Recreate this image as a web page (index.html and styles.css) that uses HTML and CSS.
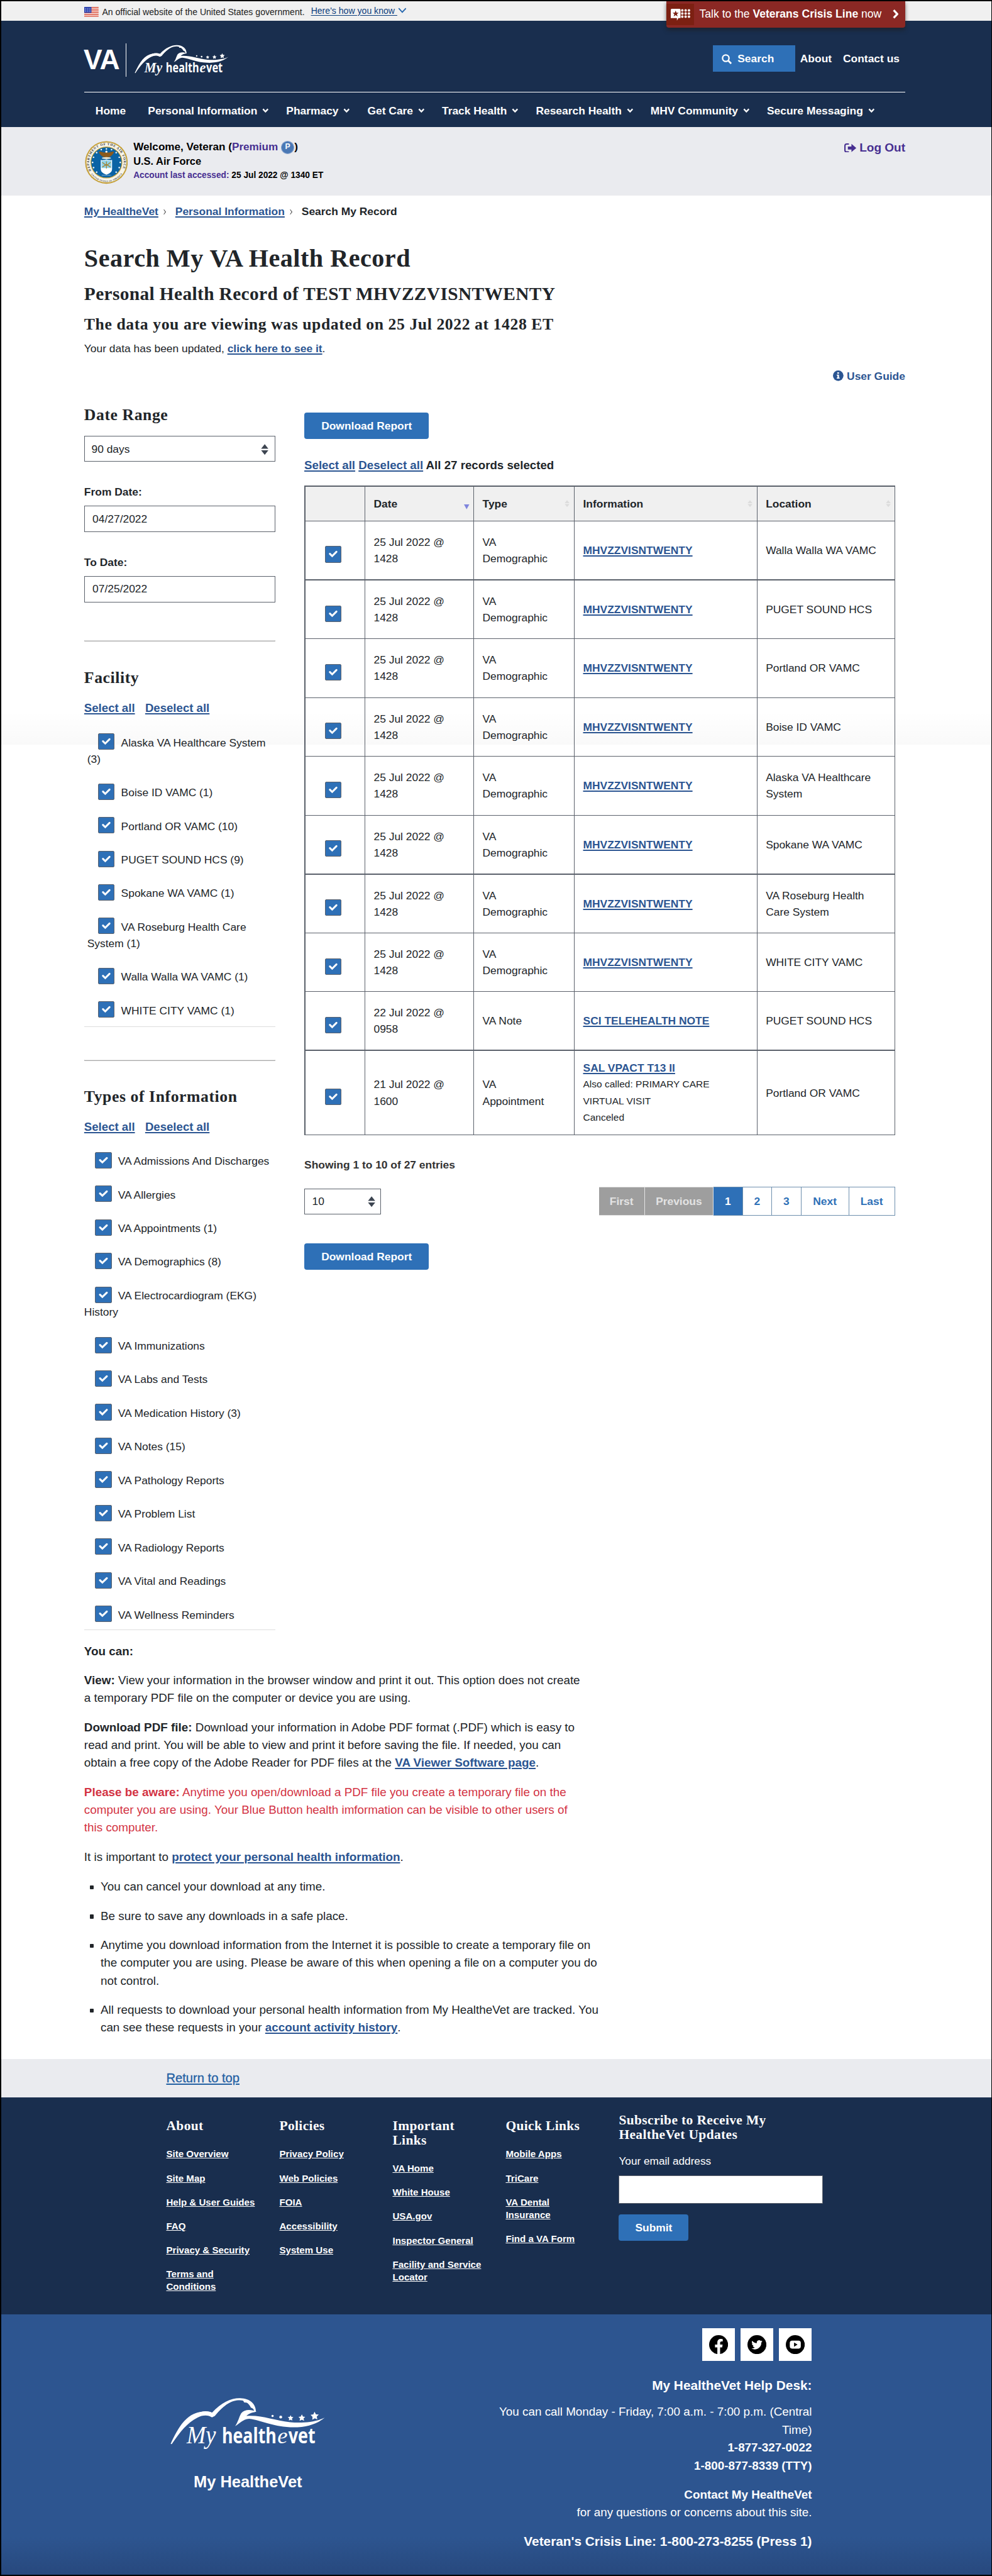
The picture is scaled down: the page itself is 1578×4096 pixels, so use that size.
FILE: index.html
```html
<!DOCTYPE html>
<html lang="en">
<head>
<meta charset="utf-8">
<title>Search My VA Health Record</title>
<link rel="stylesheet" href="styles.css">
</head>
<body>
<svg class="defs" width="0" height="0">
  <symbol id="eagle" viewBox="0 0 555 195">
    <path d="M5 165C35 100 62 60 110 52C128 49 142 50 152 54C185 18 222 2 252 3C286 4 307 22 308 50L302 52C302 44 298 38 290 36C282 20 268 10 250 10C222 10 196 24 162 66L152 71C140 62 118 62 100 72C65 90 40 120 9 166Z" fill="#fff"/>
    <path d="M152 54C135 46 112 48 92 60C112 58 135 60 150 70L164 62C182 40 205 20 230 10C205 14 176 30 158 56Z" fill="#fff"/>
    <path d="M262 10C274 9 286 14 292 22C284 20 274 18 266 18Z" fill="#fff"/>
    <path d="M310 50C288 42 268 42 256 56C248 68 246 86 234 102C252 92 260 78 284 76C330 82 360 102 430 106C490 108 528 92 552 72C520 88 470 92 430 88C370 82 330 62 274 66C282 56 296 54 310 50Z" fill="#fff"/>
    <g fill="#fff"><circle cx="367" cy="66" r="4"/><circle cx="396" cy="70" r="5"/>
      <path d="M431 63l3 6 7 1-5 5 1 7-6-3-6 3 1-7-5-5 7-1z"/>
      <path d="M471 60l4 8 8 1-6 6 2 8-8-4-8 4 2-8-6-6 8-1z"/>
      <path d="M516 51l5 9 10 1-7 7 2 10-9-4-9 5 1-10-7-7 10-2z"/></g>
  </symbol>
  <symbol id="down" viewBox="0 0 13 10"><path d="M1.7 1.7L6.5 6.8L11.3 1.7" fill="none" stroke="#fff" stroke-width="2.8"/></symbol>
  <symbol id="updown" viewBox="0 0 16 22"><path d="M8 0L15.5 9.3H.5zM8 22L15.5 12.7H.5z" fill="currentColor"/></symbol>
</svg>

<div class="banner">
  <svg class="flag" viewBox="0 0 28 19"><rect width="28" height="19" fill="#fff"/><g fill="#db5a45"><rect width="28" height="2"/><rect y="3.4" width="28" height="2"/><rect y="6.8" width="28" height="2"/><rect y="10.2" width="28" height="2"/><rect y="13.6" width="28" height="2"/><rect y="17" width="28" height="2"/></g><rect width="14" height="11.5" fill="#2c42ad"/><g fill="#aab4e6"><circle cx="3" cy="3" r="1"/><circle cx="7" cy="3" r="1"/><circle cx="11" cy="3" r="1"/><circle cx="3" cy="6" r="1"/><circle cx="7" cy="6" r="1"/><circle cx="11" cy="6" r="1"/><circle cx="3" cy="9" r="1"/><circle cx="7" cy="9" r="1"/><circle cx="11" cy="9" r="1"/></g></svg>
  <span class="official">An official website of the United States government.</span>
  <a class="how">Here's how you know </a>
  <svg class="how-arrow" viewBox="0 0 17 11"><path d="M1.5 1.5L8.5 9L15.5 1.5" fill="none" stroke="#2567ae" stroke-width="2.2"/></svg>
  <div class="crisis">
    <span class="crisis-icon"><svg viewBox="0 0 38 23"><path d="M2 0H17Q19 0 19 2V18H15L12 23V18H0V2Q0 0 2 0Z" fill="#fff"/><path d="M9.500 3.500l1.700 4.300h4.300l-3.500 2.700 1.400 4.500-3.900-2.700-3.900 2.700 1.400-4.500-3.500-2.700h4.300z" fill="#7c2012"/><g fill="#fff"><circle cx="22.500" cy="3" r="2.400"/><circle cx="29" cy="3" r="2.400"/><circle cx="35.500" cy="3" r="2.400"/><circle cx="22.500" cy="9.200" r="2.400"/><circle cx="29" cy="9.200" r="2.400"/><circle cx="35.500" cy="9.200" r="2.400"/><circle cx="22.500" cy="15.400" r="2.400"/><circle cx="29" cy="15.400" r="2.400"/><circle cx="35.500" cy="15.400" r="2.400"/></g></svg></span>
    <span class="crisis-text">Talk to the <b>Veterans Crisis Line</b> now</span>
    <svg class="crisis-arrow" viewBox="0 0 12 18"><path d="M2 1.500L9 9L2 16.500" fill="none" stroke="#fff" stroke-width="4"/></svg>
  </div>
</div>

<header class="header">
  <div class="brand">
    <span class="va">VA</span>
    <span class="bar"></span>
    <svg class="logo" viewBox="0 0 555 195"><use href="#eagle" width="555" height="195"/>
      <text x="62" y="162" class="logo-script" textLength="104" lengthAdjust="spacingAndGlyphs" font-size="88">My</text>
      <text x="187" y="163" class="logo-sans" textLength="194" lengthAdjust="spacingAndGlyphs" font-size="76">health</text>
      <text x="384" y="163" class="logo-script" font-size="82">e</text>
      <text x="423" y="163" class="logo-sans" textLength="96" lengthAdjust="spacingAndGlyphs" font-size="76">vet</text>
    </svg>
    <div class="tools">
      <a class="search"><svg viewBox="0 0 20 20"><circle cx="8" cy="8" r="6.300" fill="none" stroke="#fff" stroke-width="2.800"/><path d="M12.600 12.600L18.500 18.500" stroke="#fff" stroke-width="3.400"/></svg>Search</a>
      <a class="about">About</a>
      <a>Contact us</a>
    </div>
  </div>
  <nav class="nav">
    <a class="home">Home</a>
    <a>Personal Information<svg><use href="#down"/></svg></a>
    <a>Pharmacy<svg><use href="#down"/></svg></a>
    <a>Get Care<svg><use href="#down"/></svg></a>
    <a>Track Health<svg><use href="#down"/></svg></a>
    <a>Research Health<svg><use href="#down"/></svg></a>
    <a>MHV Community<svg><use href="#down"/></svg></a>
    <a>Secure Messaging<svg><use href="#down"/></svg></a>
  </nav>
</header>

<section class="welcome">
  <svg class="seal" viewBox="0 0 84 84">
    <circle cx="42" cy="42" r="41.500" fill="#c5a03a"/><circle cx="42" cy="42" r="39" fill="#f6f4ea"/><circle cx="42" cy="42" r="31" fill="#c5a03a"/><circle cx="42" cy="42" r="29.500" fill="#0a63a5"/>
    <path id="ring-top" d="M12.300 58A33.700 33.700 0 1 1 71.700 58" fill="none"/>
    <path id="ring-bottom" d="M9 60A37.300 37.300 0 0 0 75 60" fill="none"/>
    <text class="seal-text" font-size="6.500"><textPath href="#ring-top" textLength="134">DEPARTMENT OF THE AIR FORCE</textPath></text>
    <text class="seal-text" font-size="4"><textPath href="#ring-bottom" startOffset="6" textLength="70">UNITED STATES OF AMERICA</textPath></text>
    <g fill="#fff"><circle cx="42" cy="15.500" r="1.500"/><circle cx="32" cy="17" r="1.500"/><circle cx="52" cy="17" r="1.500"/><circle cx="23" cy="23" r="1.500"/><circle cx="61" cy="23" r="1.500"/><circle cx="17" cy="32" r="1.500"/><circle cx="67" cy="32" r="1.500"/><circle cx="15" cy="42" r="1.500"/><circle cx="69" cy="42" r="1.500"/><circle cx="17" cy="52" r="1.500"/><circle cx="67" cy="52" r="1.500"/><circle cx="23" cy="61" r="1.500"/><circle cx="61" cy="61" r="1.500"/></g>
    <path d="M27 21C32 20 36 23 39 23L42 19.500L45 23C48 23 52 20 57 21C55 27 50 31 45 32L42 34L39 32C34 31 29 27 27 21Z" fill="#8a5a1d"/><circle cx="42" cy="21" r="2" fill="#fff"/>
    <ellipse cx="42" cy="33.500" rx="9" ry="2" fill="#e8e4d0"/>
    <path d="M31 37Q36 39 42 36Q48 39 53 37V55Q53 62 42 66Q31 62 31 55Z" fill="#fff"/><path d="M32.500 38.500Q37 40 42 37.500Q47 40 51.500 38.500V53H32.500Z" fill="#8fd3ea"/>
    <path d="M42 40V54M34 42L42 48L50 42M34 51L42 46L50 51" stroke="#a5802c" stroke-width="1.500" fill="none"/>
    <path d="M33 67h18" stroke="#8fb7dc" stroke-width="1.500" stroke-dasharray="2 .8"/>
  </svg>
  <div class="who">
    <div class="who-name">Welcome, Veteran (<span class="purple">Premium</span> <span class="p">P</span>)</div>
    <div class="who-branch">U.S. Air Force</div>
    <div class="who-last"><span class="purple">Account last accessed:</span> 25 Jul 2022 @ 1340 ET</div>
  </div>
  <a class="logout"><svg viewBox="0 0 24 18"><path d="M9 1.300H4.500Q1.300 1.300 1.300 4.500V13.500Q1.300 16.700 4.500 16.700H9" fill="none" stroke="currentColor" stroke-width="2.600"/><path d="M7 6H14V1L23.500 9L14 17V12H7Z" fill="currentColor"/></svg>Log Out</a>
</section>

<main class="main">
  <div class="crumbs"><a>My HealtheVet</a><i></i><a>Personal Information</a><i></i><span>Search My Record</span></div>
  <h1>Search My VA Health Record</h1>
  <h2>Personal Health Record of TEST MHVZZVISNTWENTY</h2>
  <h3 class="updated">The data you are viewing was updated on 25 Jul 2022 at 1428 ET</h3>
  <p class="notice">Your data has been updated, <a>click here to see it</a>.</p>
  <div class="guide"><svg viewBox="0 0 20 20"><circle cx="10" cy="10" r="10" fill="currentColor"/><path d="M8.300 3.500h3.200v2.900H8.300zM7.200 8h4.300v5.700h1.300v2H7.200v-2h1.400V10H7.200z" fill="#fff"/></svg>User Guide</div>

  <div class="columns">
    <aside class="filters">
      <h3 class="range-title">Date Range</h3>
      <div class="select range"><span>90 days</span><svg><use href="#updown"/></svg></div>
      <label class="from">From Date:</label>
      <div class="input">04/27/2022</div>
      <label class="to">To Date:</label>
      <div class="input">07/25/2022</div>
      <div class="rule first"></div>
      <h3 class="group-title">Facility</h3>
      <div class="pick"><a>Select all</a><a>Deselect all</a></div>
      <ul class="checks facility">
        <li><span class="box"></span>Alaska VA Healthcare System<br>(3)</li>
        <li><span class="box"></span>Boise ID VAMC (1)</li>
        <li><span class="box"></span>Portland OR VAMC (10)</li>
        <li><span class="box"></span>PUGET SOUND HCS (9)</li>
        <li><span class="box"></span>Spokane WA VAMC (1)</li>
        <li><span class="box"></span>VA Roseburg Health Care<br>System (1)</li>
        <li><span class="box"></span>Walla Walla WA VAMC (1)</li>
        <li><span class="box"></span>WHITE CITY VAMC (1)</li>
      </ul>
      <div class="rule second"></div>
      <h3 class="group-title">Types of Information</h3>
      <div class="pick"><a>Select all</a><a>Deselect all</a></div>
      <ul class="checks types">
        <li><span class="box"></span>VA Admissions And Discharges</li>
        <li><span class="box"></span>VA Allergies</li>
        <li><span class="box"></span>VA Appointments (1)</li>
        <li><span class="box"></span>VA Demographics (8)</li>
        <li><span class="box"></span>VA Electrocardiogram (EKG)<br>History</li>
        <li><span class="box"></span>VA Immunizations</li>
        <li><span class="box"></span>VA Labs and Tests</li>
        <li><span class="box"></span>VA Medication History (3)</li>
        <li><span class="box"></span>VA Notes (15)</li>
        <li><span class="box"></span>VA Pathology Reports</li>
        <li><span class="box"></span>VA Problem List</li>
        <li><span class="box"></span>VA Radiology Reports</li>
        <li><span class="box"></span>VA Vital and Readings</li>
        <li><span class="box"></span>VA Wellness Reminders</li>
      </ul>
    </aside>

    <div class="results">
      <a class="button">Download Report</a>
      <div class="selected"><a>Select all</a> <a>Deselect all</a> All 27 records selected</div>
      <table class="records">
        <colgroup><col class="c1"><col class="c2"><col class="c3"><col class="c4"><col class="c5"></colgroup>
        <thead><tr><th></th>
          <th><div>Date<svg class="sorted" viewBox="0 0 11 11"><path d="M0 1H11L5.500 11Z" fill="#7f85dd"/></svg></div></th>
          <th><div>Type<svg class="sort"><use href="#updown"/></svg></div></th>
          <th><div>Information<svg class="sort"><use href="#updown"/></svg></div></th>
          <th><div>Location<svg class="sort"><use href="#updown"/></svg></div></th></tr></thead>
        <tbody>
          <tr><td><span class="box"></span></td><td>25 Jul 2022 @<br>1428</td><td>VA<br>Demographic</td><td><a>MHVZZVISNTWENTY</a></td><td>Walla Walla WA VAMC</td></tr>
          <tr class="heavy"><td><span class="box"></span></td><td>25 Jul 2022 @<br>1428</td><td>VA<br>Demographic</td><td><a>MHVZZVISNTWENTY</a></td><td>PUGET SOUND HCS</td></tr>
          <tr><td><span class="box"></span></td><td>25 Jul 2022 @<br>1428</td><td>VA<br>Demographic</td><td><a>MHVZZVISNTWENTY</a></td><td>Portland OR VAMC</td></tr>
          <tr><td><span class="box"></span></td><td>25 Jul 2022 @<br>1428</td><td>VA<br>Demographic</td><td><a>MHVZZVISNTWENTY</a></td><td>Boise ID VAMC</td></tr>
          <tr><td><span class="box"></span></td><td>25 Jul 2022 @<br>1428</td><td>VA<br>Demographic</td><td><a>MHVZZVISNTWENTY</a></td><td>Alaska VA Healthcare<br>System</td></tr>
          <tr><td><span class="box"></span></td><td>25 Jul 2022 @<br>1428</td><td>VA<br>Demographic</td><td><a>MHVZZVISNTWENTY</a></td><td>Spokane WA VAMC</td></tr>
          <tr class="heavy"><td><span class="box"></span></td><td>25 Jul 2022 @<br>1428</td><td>VA<br>Demographic</td><td><a>MHVZZVISNTWENTY</a></td><td>VA Roseburg Health<br>Care System</td></tr>
          <tr><td><span class="box"></span></td><td>25 Jul 2022 @<br>1428</td><td>VA<br>Demographic</td><td><a>MHVZZVISNTWENTY</a></td><td>WHITE CITY VAMC</td></tr>
          <tr><td><span class="box"></span></td><td>22 Jul 2022 @<br>0958</td><td>VA Note</td><td><a>SCI TELEHEALTH NOTE</a></td><td>PUGET SOUND HCS</td></tr>
          <tr class="heavy tall"><td><span class="box"></span></td><td>21 Jul 2022 @<br>1600</td><td>VA<br>Appointment</td><td><a>SAL VPACT T13 II</a><div class="more">Also called: PRIMARY CARE<br>VIRTUAL VISIT<br>Canceled</div></td><td>Portland OR VAMC</td></tr>
        </tbody>
      </table>
      <div class="showing">Showing 1 to 10 of 27 entries</div>
      <div class="paging">
        <div class="select size"><span>10</span><svg><use href="#updown"/></svg></div>
        <div class="pages"><span class="off first-page">First</span><span class="off prev">Previous</span><span class="on">1</span><span>2</span><span>3</span><span class="next">Next</span><span class="last">Last</span></div>
      </div>
      <a class="button second-button">Download Report</a>
    </div>
  </div>

  <div class="help">
    <p><b>You can:</b></p>
    <p><b>View:</b> View your information in the browser window and print it out. This option does not create<br>a temporary PDF file on the computer or device you are using.</p>
    <p><b>Download PDF file:</b> Download your information in Adobe PDF format (.PDF) which is easy to<br>read and print. You will be able to view and print it before saving the file. If needed, you can<br>obtain a free copy of the Adobe Reader for PDF files at the <a>VA Viewer Software page</a>.</p>
    <p class="warn"><b>Please be aware:</b> Anytime you open/download a PDF file you create a temporary file on the<br>computer you are using. Your Blue Button health imformation can be visible to other users of<br>this computer.</p>
    <p>It is important to <a>protect your personal health information</a>.</p>
    <ul>
      <li>You can cancel your download at any time.</li>
      <li>Be sure to save any downloads in a safe place.</li>
      <li>Anytime you download information from the Internet it is possible to create a temporary file on<br>the computer you are using. Please be aware of this when opening a file on a computer you do<br>not control.</li>
      <li>All requests to download your personal health information from My HealtheVet are tracked. You<br>can see these requests in your <a>account activity history</a>.</li>
    </ul>
  </div>
</main>

<div class="return"><a>Return to top</a></div>

<footer>
  <div class="links">
    <div class="col"><h4>About</h4><a>Site Overview</a><a>Site Map</a><a>Help &amp; User Guides</a><a>FAQ</a><a>Privacy &amp; Security</a><a>Terms and<br>Conditions</a></div>
    <div class="col"><h4>Policies</h4><a>Privacy Policy</a><a>Web Policies</a><a>FOIA</a><a>Accessibility</a><a>System Use</a></div>
    <div class="col"><h4>Important<br>Links</h4><a>VA Home</a><a>White House</a><a>USA.gov</a><a>Inspector General</a><a>Facility and Service<br>Locator</a></div>
    <div class="col"><h4>Quick Links</h4><a>Mobile Apps</a><a>TriCare</a><a>VA Dental<br>Insurance</a><a>Find a VA Form</a></div>
    <div class="subscribe"><h4>Subscribe to Receive My<br>HealtheVet Updates</h4><label>Your email address</label><div class="email"></div><span class="submit">Submit</span></div>
  </div>
  <div class="contact">
    <div class="mark"><svg viewBox="0 0 555 195"><use href="#eagle" width="555" height="195"/>
      <text x="62" y="162" class="logo-script" textLength="104" lengthAdjust="spacingAndGlyphs" font-size="88">My</text>
      <text x="187" y="163" class="logo-sans" textLength="194" lengthAdjust="spacingAndGlyphs" font-size="76">health</text>
      <text x="384" y="163" class="logo-script" font-size="82">e</text>
      <text x="423" y="163" class="logo-sans" textLength="96" lengthAdjust="spacingAndGlyphs" font-size="76">vet</text>
    </svg><span>My HealtheVet</span></div>
    <div class="desk">
      <div class="social">
        <span><svg viewBox="0 0 38 38"><circle cx="19" cy="19" r="19"/><path d="M16.500 38V24.500H11.800V19H16.500V14.800C16.500 10 19.400 7.500 23.600 7.500C25.500 7.500 27 7.800 27.300 7.900V12.600H25C22.700 12.600 22 14 22 15.600V19H27L26.200 24.500H22V38Z" fill="#fff"/></svg></span>
        <span><svg viewBox="0 0 38 38"><circle cx="19" cy="19" r="19"/><path d="M30 12.500a8.500 8.500 0 0 1-2.600.7 4.500 4.500 0 0 0 2-2.500 9 9 0 0 1-2.900 1.100 4.500 4.500 0 0 0-7.700 4.100 12.800 12.800 0 0 1-9.300-4.700 4.500 4.500 0 0 0 1.400 6 4.500 4.500 0 0 1-2-.5c0 2.200 1.500 4 3.600 4.500a4.500 4.500 0 0 1-2 .1 4.500 4.500 0 0 0 4.200 3.100 9 9 0 0 1-6.700 1.900 12.800 12.800 0 0 0 19.700-11.400 9 9 0 0 0 2.300-2.400z" fill="#fff"/></svg></span>
        <span><svg viewBox="0 0 38 38"><circle cx="19" cy="19" r="19"/><rect x="8" y="11" width="22" height="16" rx="4.500" fill="#fff"/><path d="M16.500 14.800V23.200L23.500 19Z"/></svg></span>
      </div>
      <p class="big">My HealtheVet Help Desk:</p>
      <p class="call">You can call Monday - Friday, 7:00 a.m. - 7:00 p.m. (Central<br>Time)<br><b>1-877-327-0022</b><br><b>1-800-877-8339 (TTY)</b></p>
      <p class="site"><b>Contact My HealtheVet</b><br>for any questions or concerns about this site.</p>
      <p class="big line">Veteran's Crisis Line: 1-800-273-8255 (Press 1)</p>
    </div>
  </div>
</footer>
</body>
</html>
```
FILE: styles.css
```css
html { font-size: 8.163px; }
* { box-sizing: border-box; margin: 0; padding: 0; }
body {
  width: 1578px;
  height: 4096px;
  overflow: hidden;
  background: #fff;
  color: #212529;
  font-family: "Liberation Sans", Arial, sans-serif;
  font-size: 2.133rem;
  line-height: 3.2rem;
  position: relative;
}
body::after {
  content: "";
  position: absolute;
  inset: 0;
  border: 2px solid #000;
  border-width: 2px 1.500px 2px 2px;
}
/* faint fold shadow across the page */
body::before {
  content: "";
  position: absolute;
  left: 0;
  right: 0;
  top: 138.5rem;
  height: 6.6rem;
  background: linear-gradient(transparent, rgba(0, 0, 0, .025));
}
.defs { position: absolute; }
svg { display: block; }
ul { list-style: none; }
h1, h2, h3, h4 { font-family: "Liberation Serif", "Times New Roman", serif; font-weight: 700; }
a { white-space: nowrap; }

.logo-script { font-family: "Liberation Serif", serif; font-style: italic; fill: #fff; }
.logo-sans { font-family: "Open Sans", sans-serif; font-weight: 700; fill: #fff; }

/* government banner */
.banner {
  position: relative;
  display: flex;
  height: 4rem;
  padding-left: 16.4rem;
  background: #f0f0f0;
  font-size: 1.726rem;
}
.flag { width: 2.8rem; height: 1.9rem; margin-top: 1.4rem; }
.official { margin: .7rem 0 0 .7rem; width: 40.7rem; white-space: nowrap; color: #212121; }
.how { margin-top: .45rem; width: 16.9rem; color: #0b3d7c; text-decoration: underline; text-underline-offset: .2rem; white-space: pre; }
.how-arrow { width: 1.7rem; height: 1.1rem; margin-top: 1.5rem; }
.crisis {
  position: absolute;
  z-index: 2;
  left: 129.9rem;
  top: .3rem;
  width: 46.5rem;
  height: 5.1rem;
  display: flex;
  background: #8b2824;
  border-radius: 0 0 .5rem .5rem;
  box-shadow: 0 .4rem .8rem rgba(30, 30, 30, .6);
  color: #fff;
  font-size: 2.15rem;
}
.crisis-icon { width: 5.3rem; height: 4.2rem; margin-top: .4rem; padding: 1rem 0 0 .8rem; background: #7c2012; }
.crisis-icon svg { width: 3.8rem; height: 2.3rem; }
.crisis-text { margin: .8rem 0 0 1.1rem; width: 37.6rem; white-space: nowrap; }
.crisis-arrow { width: 1.2rem; height: 1.8rem; margin-top: 1.6rem; }

/* site header */
.header { height: 20.8rem; padding-left: 16.4rem; background: #192e4e; color: #fff; font-weight: 700; }
.brand { width: 160rem; height: 14rem; display: flex; border-bottom: 1px solid #fff; }
.va { width: 8.25rem; margin: 4.55rem 0 0 -.1rem; font-size: 5.45rem; line-height: 6.2rem; letter-spacing: -.1rem; }
.bar { width: 1px; height: 6.4rem; margin-top: 4.5rem; background: #fff; }
.logo { width: 18.5rem; height: 6.5rem; margin: 4.75rem 0 0 1.45rem; overflow: visible; }
.tools { display: flex; margin-left: auto; padding-right: 1.1rem; }
.tools a { padding-top: 5.75rem; margin-left: 2.2rem; }
.tools .search { display: flex; width: 16rem; height: 5.2rem; margin: 4.8rem 0 0; padding: 1.9rem 0 0 1.7rem; background: #2e70b7; line-height: 1.6rem; }
.search svg { width: 2rem; height: 2rem; margin: -.2rem 1.1rem 0 0; }
.tools .about { margin-left: 1rem; }
.nav { display: flex; padding: 2rem 0 0 2.2rem; }
.nav a { display: flex; margin-right: 3.38rem; }
.nav .home { margin-right: 4.3rem; }
.nav svg { width: 1.3rem; height: 1rem; margin: 1.1rem 0 0 .95rem; }

/* signed-in strip */
.welcome { height: 13.3rem; display: flex; padding-left: 16.5rem; background: #eaebef; font-weight: 700; color: #000; }
.seal { width: 8.4rem; height: 8.4rem; margin-top: 2.7rem; }
.seal-text { font-family: "Liberation Serif", serif; font-weight: 700; fill: #333; }
.who { margin: 2.1rem 0 0 1.1rem; width: 60rem; }
.purple { color: #472f91; }
.who-name { font-size: 2.1rem; height: 2.9rem; white-space: nowrap; }
.p { display: inline-block; width: 2.6rem; height: 2.5rem; margin: -1rem 0 0; vertical-align: .15rem; border-radius: 50%; background: #4a78b5; border: 1px solid #8fa9d0; color: #fff; font-size: 1.5rem; line-height: 2.2rem; text-align: center; }
.who-branch { font-size: 2.01rem; height: 2.85rem; }
.who-last { font-size: 1.68rem; }
.logout { display: flex; margin: 2.4rem 0 0 auto; padding-right: 16.9rem; color: #472f91; font-size: 2.33rem; }
.logout svg { width: 2.4rem; height: 1.8rem; margin: .7rem .6rem 0 0; }

/* page body */
.main { height: 363rem; padding-left: 16.4rem; }
.main a { color: #2b5592; font-weight: 700; text-decoration: underline; text-decoration-thickness: 2px; text-underline-offset: .25rem; }
.crumbs { display: flex; padding-top: 1.46rem; font-weight: 700; }
.crumbs i { width: .7rem; height: .7rem; margin: 1.4rem 1.8rem 0 .8rem; border: 1px solid #333; border-width: 1px 1px 0 0; transform: scaleX(.7) rotate(45deg); }
h1 { margin-top: 4.78rem; font-size: 4.92rem; line-height: 5.6rem; letter-spacing: .06rem; }
h2 { margin-top: 2.09rem; font-size: 3.6rem; line-height: 4rem; letter-spacing: .045rem; }
h3 { font-size: 3.15rem; line-height: 3.6rem; letter-spacing: .07rem; white-space: nowrap; }
.updated { margin-top: 2.21rem; }
.notice { margin-top: 1.22rem; }
.guide { display: flex; justify-content: flex-end; width: 160rem; margin-top: 2.23rem; color: #2b5592; font-weight: 700; }
.guide svg { width: 2.05rem; height: 2.05rem; margin: .45rem .6rem 0 0; }
.columns { display: flex; gap: 5.7rem; margin-top: 2.11rem; height: 240.5rem; }
.filters { width: 37.2rem; }

.range-title { margin-top: 2.07rem; }
.select { display: flex; justify-content: space-between; border: 1px solid #5b616b; }
.select svg { width: 1.5rem; height: 2.15rem; color: #3d4551; }
.range { height: 5.05rem; margin-top: 2.23rem; padding: .8rem 1.1rem 0 1.3rem; }
.range svg { margin-top: .7rem; }
label { display: block; font-weight: 700; }
.from { margin-top: 4.31rem; }
.to { margin-top: 4.26rem; }
.input { height: 5.1rem; margin-top: 1.1rem; padding: .75rem 1.5rem 0; border: 1px solid #5b616b; }
.rule { height: .3rem; border: 1px solid #bbb; border-bottom-color: #aaa; border-top-color: #ddd; }
.rule.first { margin-top: 7.4rem; }
.rule.second { margin-top: 6.35rem; }
.group-title { margin-top: 5.17rem; }
.pick { display: flex; gap: 2rem; margin-top: 2.54rem; font-size: 2.28rem; }
.checks { line-height: 3.25rem; border-bottom: 1px solid #ddd; white-space: nowrap; }
.facility { margin-top: 3.52rem; padding: 0 0 1.42rem .6rem; }
.facility li + li { margin-top: 3.28rem; }
.types { margin-top: 3.38rem; padding-bottom: 1.2rem; }
.types li + li { margin-top: 3.3rem; }
.box {
  display: inline-block;
  width: 3.2rem;
  height: 3.2rem;
  border: 1px solid #5b616b;
  border-radius: 2px;
  background: #2e70b7 url("data:image/svg+xml,%3Csvg xmlns='http://www.w3.org/2000/svg' viewBox='0 0 30 30'%3E%3Cpath d='M8.500 14.500L13 19L21.500 10.500' fill='none' stroke='white' stroke-width='3.800' stroke-linecap='round'/%3E%3C/svg%3E") center / 100% no-repeat;
}
.checks .box { margin: -.2rem 1.25rem 0 2.15rem; vertical-align: -.7rem; }

/* results */
.results { width: 115.1rem; }
.main .button {
  display: block;
  width: 24.3rem;
  height: 5.1rem;
  margin-top: 3.4rem;
  padding-top: .95rem;
  border-radius: .5rem;
  background: #2e70b7;
  color: #fff;
  text-align: center;
  text-decoration: none;
}
.selected { margin-top: 3.51rem; font-size: 2.29rem; font-weight: 700; }
.records { width: 115rem; margin-top: 2.37rem; border-collapse: collapse; table-layout: fixed; border-left: 2px solid #5b616b; border-top: 2px solid #5b616b; }
.c1 { width: 11.7rem; } .c2 { width: 21.2rem; } .c3 { width: 19.6rem; } .c4 { width: 35.6rem; } .c5 { width: 26.9rem; }
.records th, .records td { border: 1px solid #5b616b; padding: 0 0 0 1.65rem; text-align: left; vertical-align: middle; white-space: nowrap; }
.records th { height: 6.8rem; background: #f0f0f0; }
.records th div { display: flex; justify-content: space-between; align-items: center; padding-right: .8rem; }
.records td { height: 11.46rem; }
.records td:first-child { padding: 1.6rem 0 0 3.8rem; }
.records td .box { display: block; }
.records .heavy td { border-top-width: 2px; }
.records .tall td { height: 16.4rem; }
.sort { width: 1rem; height: 1.9rem; color: #dcdcdc; }
.sorted { width: 1.05rem; height: 1.1rem; margin-top: 1rem; }
.more { font-size: 1.9rem; }
.showing { margin-top: 4.2rem; font-weight: 700; color: #333; }
.paging { display: flex; justify-content: space-between; height: 5.6rem; margin-top: 2.69rem; }
.size { width: 15rem; height: 5.05rem; margin-top: .35rem; padding: .8rem 1rem 0 1.4rem; }
.size svg { margin-top: .5rem; }
.pages { display: flex; font-weight: 700; color: #2e70b7; text-align: center; line-height: 5.4rem; }
.pages span { width: 5.7rem; height: 5.6rem; border: 1px solid #6d8fae; border-left-width: 0; }
.pages .off { background: #9e9e9e; color: #e3e3e3; border-color: #e3e3e3; }
.pages .on { background: #2e70b7; color: #fff; }
.pages .first-page { width: 8.95rem; }
.pages .prev { width: 13.4rem; }
.pages .next { width: 9.3rem; }
.pages .last { width: 8.95rem; }
.main .second-button { margin-top: 5.4rem; }

.help { width: 110rem; margin-top: 2.44rem; font-size: 2.31rem; line-height: 3.44rem; white-space: nowrap; }
.help p, .help li { margin-bottom: 2.29rem; }
.help .warn { color: #d33343; }
.help ul { padding-left: 3.2rem; }
.help li { position: relative; }
.help li::before { content: ""; position: absolute; left: -2.05rem; top: 1.45rem; width: .75rem; height: .75rem; background: #212529; border-radius: 1px; }

/* footer */
.return { height: 7.4rem; padding: 2.05rem 0 0 32.4rem; background: #eaebef; font-size: 2.47rem; }
.return a { color: #2360a3; -webkit-text-stroke: .3px #2360a3; text-decoration: underline; text-decoration-thickness: 2px; text-underline-offset: .25rem; }
footer { color: #fff; }
.links { display: flex; height: 42.3rem; padding: 4.24rem 0 0 32.4rem; background: #192e4e; }
h4 { font-size: 2.63rem; line-height: 2.8rem; letter-spacing: .045rem; white-space: nowrap; }
.col { width: 22.05rem; display: flex; flex-direction: column; font-size: 1.85rem; line-height: 2.45rem; font-weight: 700; }
.col h4 { margin-bottom: .65rem; }
.col a { margin-top: 2.22rem; text-decoration: underline; }
.subscribe { margin-top: -1.1rem; }
.subscribe label { margin-top: 2.39rem; font-weight: 400; font-size: 2.11rem; line-height: 2.8rem; }
.email { width: 39.8rem; height: 5.57rem; margin-top: 1.27rem; background: #fff; border: 1px solid #5b616b; }
.submit { display: block; width: 13.6rem; height: 5.1rem; margin-top: 2.13rem; padding-top: .95rem; border-radius: .5rem; background: #2e70b7; text-align: center; font-weight: 700; }
.contact { display: flex; justify-content: space-between; height: 51rem; padding: 2.7rem 35.1rem 0 32.4rem; background: linear-gradient(#2d5590 85%, #27487d); }
.mark { width: 31.8rem; margin-top: 13.5rem; text-align: center; }
.mark svg { width: 30.5rem; height: 10.7rem; margin-left: .5rem; overflow: visible; }
.mark span { display: block; margin-top: 3.8rem; font-size: 3.12rem; font-weight: 700; line-height: 4rem; }
.desk { text-align: right; font-size: 2.31rem; line-height: 3.5rem; white-space: nowrap; }
.social { display: flex; justify-content: flex-end; gap: 1.1rem; }
.social span { display: flex; align-items: center; justify-content: center; width: 6.4rem; height: 6.4rem; background: #fff; }
.social svg { width: 3.7rem; height: 3.7rem; }
.big { margin-top: 3.04rem; font-size: 2.55rem; font-weight: 700; }
.call { margin-top: 1.68rem; }
.site { margin-top: 2.13rem; }
.line { margin-top: 2.12rem; }
```
